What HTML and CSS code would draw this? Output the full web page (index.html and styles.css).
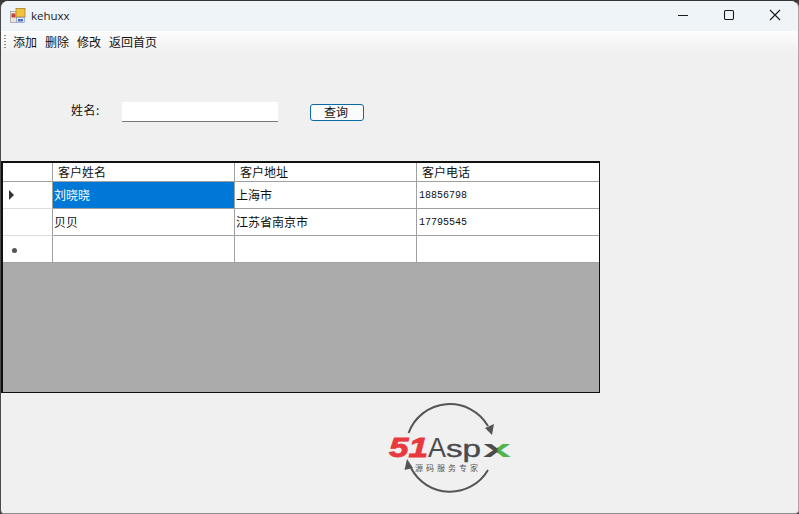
FILE: index.html
```html
<!DOCTYPE html>
<html lang="zh">
<head>
<meta charset="utf-8">
<title>kehuxx</title>
<link rel="stylesheet" href="styles.css">
</head>
<body>
<div class="window">
  <header class="titlebar">
    <svg class="appicon" width="16" height="15" viewBox="0 0 16 15">
      <rect x="0.500" y="3.500" width="6" height="11" fill="#e8e4dc" stroke="#9a9a9a" stroke-width=".7"/>
      <rect x="1.500" y="5.500" width="4" height="4" fill="#c8403a"/>
      <rect x="6" y="0.500" width="9" height="8.500" fill="#f2c23c" stroke="#a8842a" stroke-width=".8"/>
      <rect x="6.500" y="9.500" width="8" height="5" fill="#dfe6f2" stroke="#8a9ac0" stroke-width=".7"/>
      <rect x="8" y="11" width="5" height="2.500" fill="#4f72c4"/>
    </svg>
    <span class="title">kehuxx</span>
    <div class="controls">
      <svg width="12" height="12" viewBox="0 0 12 12"><path d="M1 6.500H11" stroke="#1a1a1a" stroke-width="1.100" fill="none"/></svg>
      <svg width="12" height="12" viewBox="0 0 12 12"><rect x="1.500" y="1.500" width="9" height="9" rx="1.200" stroke="#1a1a1a" stroke-width="1.100" fill="none"/></svg>
      <svg width="12" height="12" viewBox="0 0 12 12"><path d="M1 1L11 11M11 1L1 11" stroke="#1a1a1a" stroke-width="1.100" fill="none"/></svg>
    </div>
  </header>
  <nav class="menubar">
    <span class="grip"></span>
    <span class="item">添加</span>
    <span class="item">删除</span>
    <span class="item">修改</span>
    <span class="item">返回首页</span>
  </nav>
  <section class="search">
    <label class="name-label">姓名:</label>
    <input class="name-input" type="text">
    <button class="query">查询</button>
  </section>
  <section class="grid">
    <div class="cell head corner"></div>
    <div class="cell head">客户姓名</div>
    <div class="cell head">客户地址</div>
    <div class="cell head last">客户电话</div>

    <div class="cell rowhead"><span class="arrow"></span></div>
    <div class="cell selected">刘晓晓</div>
    <div class="cell">上海市</div>
    <div class="cell phone last">18856798</div>

    <div class="cell rowhead"></div>
    <div class="cell">贝贝</div>
    <div class="cell">江苏省南京市</div>
    <div class="cell phone last">17795545</div>

    <div class="cell rowhead lastrow"><span class="star"></span></div>
    <div class="cell"></div>
    <div class="cell"></div>
    <div class="cell last"></div>
  </section>
  <svg class="logo" width="126" height="94" viewBox="0 0 126 94">
    <defs>
      <linearGradient id="xfill" x1="0" x2="1" y1="0" y2="0">
        <stop offset="0.450" stop-color="#4b4b4b"/>
        <stop offset="0.550" stop-color="#4fb548"/>
      </linearGradient>
    </defs>
    <path d="M21.600 31A44 44 0 0 1 101 24" fill="none" stroke="#555" stroke-width="2"/>
    <path d="M105 33L98 26L107 22Z" fill="#555"/>
    <path d="M101 68A44 44 0 0 1 24 66" fill="none" stroke="#555" stroke-width="2"/>
    <path d="M20 57L26 66L17.500 68Z" fill="#555"/>
    <text class="logo-51" x="2" y="55" textLength="39" lengthAdjust="spacingAndGlyphs">51</text>
    <text class="logo-a" x="41" y="55" textLength="18" lengthAdjust="spacingAndGlyphs">A</text>
    <text class="logo-sp" x="59" y="55" textLength="35" lengthAdjust="spacingAndGlyphs">sp</text>
    <text class="logo-x" x="96" y="55" textLength="28" lengthAdjust="spacingAndGlyphs" fill="url(#xfill)">x</text>
    <text class="logo-sub" x="28" y="69">源码服务专家</text>
  </svg>
</div>
</body>
</html>
```
FILE: styles.css
```css
html, body {
  margin: 0;
  padding: 0;
  height: 100%;
  overflow: hidden;
  background: #3c3c3c;
}
.window {
  box-sizing: border-box;
  width: 799px;
  height: 514px;
  background: #f0f0f0;
  border-top: 1px solid #333;
  border-left: 1px solid #4a4a4a;
  border-right: 1px solid #a8a8a8;
  border-bottom: 1px solid #8f8f8f;
  border-radius: 8px 8px 4px 4px;
  overflow: hidden;
  display: flex;
  flex-direction: column;
  font-family: "Noto Sans CJK SC", sans-serif;
  font-size: 12px;
  color: #111;
}
.titlebar {
  height: 30px;
  flex: none;
  background: #eff4f9;
  display: flex;
  align-items: center;
  padding-left: 9px;
}
.appicon { margin-top: -1px; }
.title {
  margin: -2px 0 0 5px;
  font-family: "Open Sans", sans-serif;
  font-size: 11.500px;
  color: #1a1a1a;
}
.controls {
  margin-left: auto;
  display: flex;
  gap: 34px;
  padding-right: 17px;
  margin-top: -2px;
}
.menubar {
  height: 22px;
  flex: none;
  display: flex;
  align-items: center;
  background: linear-gradient(#fdfdfd, #f0f0f0);
  padding-left: 3px;
}
.grip {
  width: 2px;
  height: 14px;
  margin-right: 7px;
  background: repeating-linear-gradient(#8a8a8a 0 1px, transparent 1px 3px);
}
.item {
  margin-right: 8px;
  line-height: 18px;
}
.search {
  display: flex;
  align-items: center;
  height: 22px;
  margin-top: 48px;
  padding-left: 70px;
}
.name-label {
  width: 51px;
  margin-top: -6px;
  letter-spacing: .5px;
}
.name-input {
  box-sizing: border-box;
  width: 156px;
  height: 20px;
  border: 0;
  border-bottom: 1px solid #7a7a7a;
  background: #fff;
  padding: 0;
  margin: 0 0 1px;
}
.query {
  box-sizing: border-box;
  width: 54px;
  height: 17px;
  margin: 1px 0 0 32px;
  padding: 0 2px 2px 0;
  border: 1px solid #0a6aa8;
  border-radius: 3px;
  background: #fbfbfb;
  font: inherit;
  line-height: 13px;
  color: #111;
}
.grid {
  box-sizing: border-box;
  width: 599px;
  height: 232px;
  margin-top: 38px;
  border-style: solid;
  border-color: #111;
  border-width: 2px 1px 1px 2px;
  background: #ababab;
  display: grid;
  grid-template-columns: 50px 182px 182px 1fr;
  grid-template-rows: 19px 27px 27px 27px;
  align-content: start;
}
.cell {
  box-sizing: border-box;
  background: #fff;
  border-right: 1px solid #a0a0a0;
  border-bottom: 1px solid #a0a0a0;
  padding: 0 0 1px 1px;
  display: flex;
  align-items: center;
  white-space: nowrap;
}
.last { border-right: 0; }
.head { padding-left: 5px; }
.rowhead {
  padding: 0;
  border-bottom-color: #dcdcdc;
}
.lastrow { border-bottom-color: #a0a0a0; }
.selected {
  background: #0078d7;
  color: #fff;
}
.phone {
  font-family: "Liberation Mono", monospace;
  font-size: 10px;
  padding: 1px 0 0 2px;
}
.arrow {
  margin-left: 6px;
  border-left: 5px solid #333;
  border-top: 5px solid transparent;
  border-bottom: 5px solid transparent;
}
.star {
  margin: 3px 0 0 9px;
  width: 5px;
  height: 5px;
  border-radius: 50%;
  background: #555;
}
.logo {
  margin: 9px 0 0 386px;
  flex: none;
}
.logo text { font-family: "Liberation Sans", sans-serif; }
.logo .logo-51 {
  font-size: 27px;
  font-weight: 700;
  font-style: italic;
  fill: #e8393f;
  stroke: #e8393f;
  stroke-width: .8px;
}
.logo .logo-a {
  font-size: 27px;
  fill: #4b4b4b;
}
.logo .logo-sp {
  font-size: 23px;
  fill: #4b4b4b;
  stroke: #4b4b4b;
  stroke-width: .4px;
}
.logo .logo-x {
  font-size: 24px;
  font-weight: 700;
}
.logo .logo-sub {
  font-family: "Noto Sans CJK SC", sans-serif;
  font-size: 8px;
  letter-spacing: 3px;
  fill: #555;
}
```
